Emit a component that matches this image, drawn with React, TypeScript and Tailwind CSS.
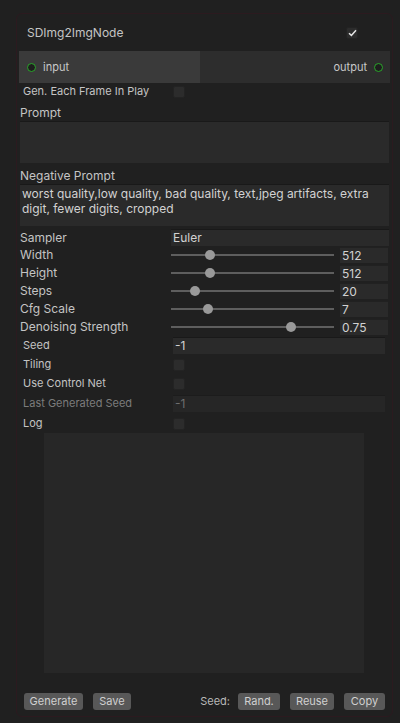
import React from 'react';

const font = { fontFamily: 'Inter, "Noto Sans", sans-serif' };

const Check: React.FC<{ checked?: boolean }> = ({ checked }) => (
  <div className="w-[12px] h-[12px] rounded-[2px] bg-[#2c2c2c] border border-[#232323] flex items-center justify-center">
    {checked && (
      <svg width="9" height="8" viewBox="0 0 9 8">
        <path d="M1 4.2 L3.4 6.4 L8 1.3" stroke="#e6e6e6" strokeWidth="1.5" fill="none" />
      </svg>
    )}
  </div>
);

const Port: React.FC = () => (
  <div className="w-[9px] h-[9px] rounded-full border-[1.5px] border-[#2aa52a] bg-[#1e1e1e]" />
);

const SliderRow: React.FC<{ label: string; pos: number; value: string }> = ({ label, pos, value }) => (
  <div className="h-[18px] flex items-center">
    <div className="w-[151px] text-[#c4c4c4]">{label}</div>
    <div className="relative w-[163px] h-[18px] flex items-center">
      <div className="w-full h-[2px] bg-[#5e5e5e]" />
      <div
        className="absolute top-[4px] w-[10px] h-[10px] rounded-full bg-[#999999]"
        style={{ left: pos - 5 }}
      />
    </div>
    <div className="ml-[6px] w-[48px] h-[16px] bg-[#2a2a2a] border-t border-[#212121] pl-[2px] leading-[15px] text-[#d2d2d2]">
      {value}
    </div>
  </div>
);

const Btn: React.FC<{ label: string; w: string }> = ({ label, w }) => (
  <div className={`${w} h-[17px] rounded-[3px] bg-[#585858] text-[#d0d0d0] flex items-center justify-center`}>{label}</div>
);

export default function App() {
  return (
    <div className="w-[400px] h-[723px] bg-[#202020] pt-[13px] pl-[16px] text-[12px]" style={font}>
      <div className="w-[377px] h-[704px] rounded-[6px] border border-[#2c1a1f] flex flex-col">
        {/* title */}
        <div className="h-[37px] flex items-center pl-[10px] pr-[34px] justify-between">
          <span className="text-[12px] text-[#c4c4c4]">SDImg2ImgNode</span>
          <Check checked />
        </div>
        {/* ports */}
        <div className="mx-[2px] h-[32px] flex">
          <div className="w-[181px] bg-[#3a3a3a] flex items-center pl-[8px] gap-[7px] text-[11px] text-[#c8c8c8]">
            <Port />
            <span>input</span>
          </div>
          <div className="flex-1 bg-[#2d2d2d] flex items-center justify-end pr-[7px] gap-[7px] text-[11px] text-[#c8c8c8]">
            <span>output</span>
            <Port />
          </div>
        </div>

        <div className="pl-[3px] pr-[3px] flex flex-col">
          <div className="h-[17px] flex items-center">
            <div className="w-[153px] pl-[3px] text-[11px] text-[#c4c4c4]">Gen. Each Frame In Play</div>
            <Check />
          </div>

          <div className="h-[21px] flex items-center pt-[5px] text-[#c4c4c4]">Prompt</div>
          <div className="h-[42px] bg-[#2a2a2a] border-t border-[#191919]" />

          <div className="h-[21px] flex items-center pt-[5px] text-[#c4c4c4]">Negative Prompt</div>
          <div className="h-[42px] bg-[#2a2a2a] border-t border-[#191919] px-[2px] pt-[1px] leading-[15px] text-[#d2d2d2]">
            worst quality,low quality, bad quality, text,jpeg artifacts, extra digit, fewer digits, cropped
          </div>

          <div className="h-[3px]" />
          <div className="h-[17px] flex items-center">
            <div className="w-[151px] text-[#c4c4c4]">Sampler</div>
            <div className="flex-1 h-[17px] bg-[#2a2a2a] border-t border-[#191919] pl-[2px] leading-[16px] text-[#d2d2d2]">Euler</div>
          </div>
          <SliderRow label="Width" pos={39} value="512" />
          <SliderRow label="Height" pos={39} value="512" />
          <SliderRow label="Steps" pos={24} value="20" />
          <SliderRow label="Cfg Scale" pos={37} value="7" />
          <SliderRow label="Denoising Strength" pos={120} value="0.75" />

          <div className="h-[19px] flex items-center pl-[3px]">
            <div className="w-[150px] text-[11px] text-[#c4c4c4]">Seed</div>
            <div className="w-[212px] h-[17px] bg-[#2a2a2a] border-t border-[#191919] pl-[2px] leading-[16px] text-[#d2d2d2]">-1</div>
          </div>
          <div className="h-[19px] flex items-center pl-[3px]">
            <div className="w-[150px] text-[11px] text-[#c4c4c4]">Tiling</div>
            <Check />
          </div>
          <div className="h-[19px] flex items-center pl-[3px]">
            <div className="w-[150px] text-[11px] text-[#c4c4c4]">Use Control Net</div>
            <Check />
          </div>
          <div className="h-[21px] flex items-center pl-[3px]">
            <div className="w-[150px] text-[11px] text-[#7c7c7c]">Last Generated Seed</div>
            <div className="w-[212px] h-[17px] bg-[#262626] border-t border-[#1c1c1c] pl-[2px] leading-[16px] text-[#6e6e6e]">-1</div>
          </div>
          <div className="h-[19px] flex items-center pl-[3px]">
            <div className="w-[150px] text-[11px] text-[#c4c4c4]">Log</div>
            <Check />
          </div>
          <div className="ml-[24px] w-[320px] h-[240px] bg-[#272727]" />
        </div>

        <div className="mt-[20px] flex items-center pl-[7px] pr-[7px] text-[11px]">
          <Btn label="Generate" w="w-[59px]" />
          <div className="w-[10px]" />
          <Btn label="Save" w="w-[38px]" />
          <div className="flex-1" />
          <span className="text-[#b8b8b8] mr-[8px]">Seed:</span>
          <Btn label="Rand." w="w-[42px]" />
          <div className="w-[10px]" />
          <Btn label="Reuse" w="w-[44px]" />
          <div className="w-[10px]" />
          <Btn label="Copy" w="w-[41px]" />
        </div>
      </div>
    </div>
  );
}
